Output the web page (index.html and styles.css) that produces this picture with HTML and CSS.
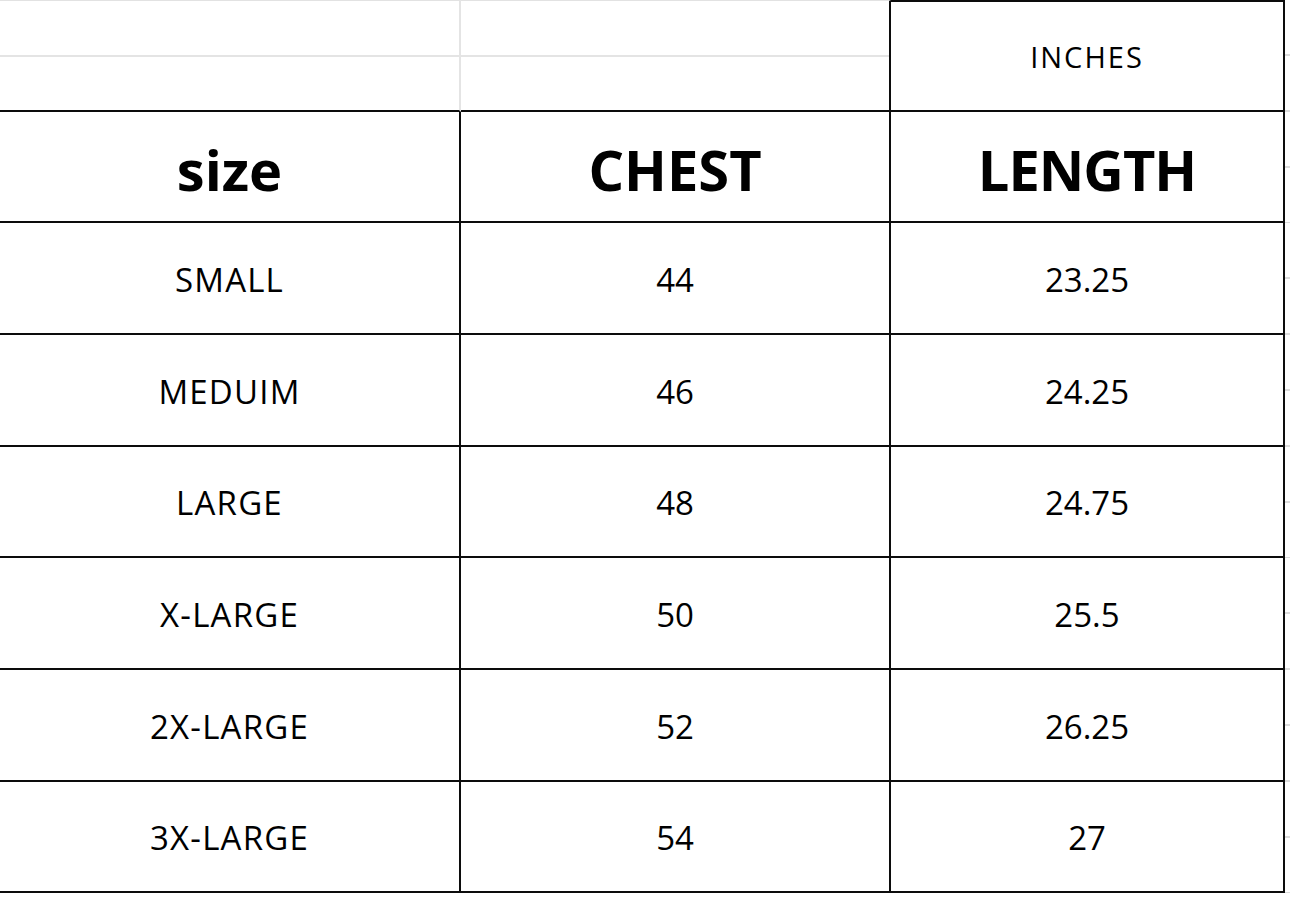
FILE: index.html
```html
<!DOCTYPE html>
<html lang="en">
<head>
<meta charset="utf-8">
<title>Size chart</title>
<link rel="stylesheet" href="styles.css">
</head>
<body>
<div class="sheet">
  <div class="cell blank first"><div class="half"></div></div>
  <div class="cell blank"><div class="half"></div></div>
  <div class="cell unit">INCHES</div>
  <div class="cell strip"></div>

  <div class="cell head">size</div>
  <div class="cell head">CHEST</div>
  <div class="cell head last">LENGTH</div>
  <div class="cell strip"></div>

  <div class="cell">SMALL</div><div class="cell num">44</div><div class="cell num last">23.25</div><div class="cell strip"></div>
  <div class="cell">MEDUIM</div><div class="cell num">46</div><div class="cell num last">24.25</div><div class="cell strip"></div>
  <div class="cell">LARGE</div><div class="cell num">48</div><div class="cell num last">24.75</div><div class="cell strip"></div>
  <div class="cell">X-LARGE</div><div class="cell num">50</div><div class="cell num last">25.5</div><div class="cell strip"></div>
  <div class="cell">2X-LARGE</div><div class="cell num">52</div><div class="cell num last">26.25</div><div class="cell strip"></div>
  <div class="cell">3X-LARGE</div><div class="cell num">54</div><div class="cell num last">27</div><div class="cell strip"></div>
</div>
</body>
</html>
```

FILE: styles.css
```css
html, body {
  margin: 0;
  padding: 0;
  background: #ffffff;
}

body {
  width: 1290px;
  height: 897px;
  overflow: hidden;
  font-family: "Open Sans", "Noto Sans", sans-serif;
  color: #000;
}

.sheet {
  display: grid;
  grid-template-columns: 461px 430px 394px 1fr;
  grid-template-rows: 112px 111px 112px 112px 111px 112px 112px 111px;
}

.cell {
  box-sizing: border-box;
  display: flex;
  align-items: center;
  justify-content: center;
  background: #fff;
  border-right: 2px solid #0c0c0c;
  border-bottom: 2px solid #0c0c0c;
  font-size: 33px;
  font-weight: 500;
  letter-spacing: 1.2px;
  padding-top: 2px;
}

.cell.num {
  letter-spacing: 0;
}

.cell.blank {
  display: block;
  padding-top: 0;
  border-top: 1px solid #e2e2e2;
}

.cell.blank.first {
  border-right: 2px solid #e4e4e4;
}

.half {
  height: 54px;
  border-bottom: 2px solid #e4e4e4;
}

.cell.unit {
  border-top: 2px solid #0c0c0c;
  font-size: 29px;
  letter-spacing: 2px;
  padding-top: 0;
}

.cell.head {
  font-weight: 700;
  font-size: 56px;
  letter-spacing: 0;
  padding-top: 4px;
}

.cell.head.last {
  letter-spacing: -1px;
}

.cell.strip {
  border: none;
  background: repeating-linear-gradient(to bottom, transparent 0, transparent 54px, #dcdcdc 54px, #dcdcdc 55.8px);
}
```
